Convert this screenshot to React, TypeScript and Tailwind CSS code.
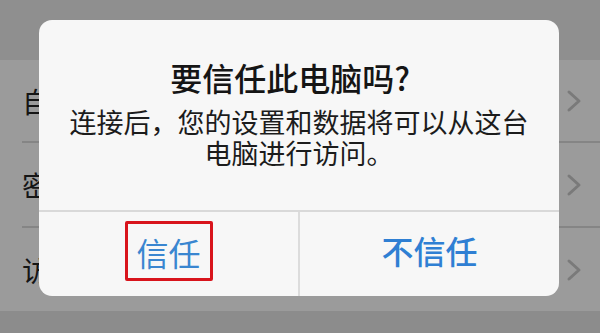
import React from "react";

const rows = [
  { label: "自", h: "h-[83px]" },
  { label: "密", h: "h-[85px]" },
  { label: "访", h: "h-[83px]" },
];

const Chevron = () => (
  <svg width="16" height="24" viewBox="0 0 16 24" fill="none">
    <polyline
      points="3,3 13,12 3,21"
      stroke="#7a7a7a"
      strokeWidth="3"
      strokeLinecap="round"
      strokeLinejoin="round"
    />
  </svg>
);

const TrustDialog = () => {
  return (
    <div className="absolute left-[39px] top-[20px] w-[520px] h-[276px] rounded-[13px] bg-[#f7f7f7] flex flex-col overflow-hidden">
      <div className="h-[190px] flex flex-col items-center pt-[39px]">
        <h1 className="text-[32px] leading-[36px] font-medium text-[#151515] mr-[18px]">
          要信任此电脑吗?
        </h1>
        <div className="mt-[11px] flex flex-col items-center text-[27px] leading-[31px] text-[#1c1c1c]">
          <p className="whitespace-nowrap">连接后，您的设置和数据将可以从这台</p>
          <p className="whitespace-nowrap">电脑进行访问。</p>
        </div>
      </div>
      <div className="h-[2px] bg-[#d9d9d9]" />
      <div className="flex-1 flex">
        <div className="flex-1 flex items-center justify-center">
          <div className="border-[3px] border-[#d8141c] rounded-[2px] w-[88px] h-[60px] flex items-center justify-center mt-[-6px]">
            <span className="text-[32px] leading-none text-[#3a86d0] pt-[2px]">信任</span>
          </div>
        </div>
        <div className="w-[2px] bg-[#dcdcdc]" />
        <div className="flex-1 flex items-center justify-center">
          <span className="text-[32px] leading-none text-[#2f7fd3] font-medium mt-[-8px]">不信任</span>
        </div>
      </div>
    </div>
  );
};

const App = () => {
  return (
    <div
      className="relative w-[600px] h-[333px] overflow-hidden bg-[#8e8e8e]"
      style={{ fontFamily: '"Noto Sans CJK SC", "Noto Sans", sans-serif' }}
    >
      <div className="h-[60px] bg-[#8f8f8f]" />
      <div className="bg-[#9b9b9b]">
        {rows.map((row, i) => (
          <div key={i} className={`${row.h} flex items-center pl-[22px]`}>
            <div
              className={`flex-1 h-full flex items-center pr-[18px] ${
                i < rows.length - 1 ? "border-b-[2px] border-[#858585]" : ""
              }`}
            >
              <span className="flex-1 text-[28px] text-[#151515]">{row.label}</span>
              <Chevron />
            </div>
          </div>
        ))}
      </div>
      <div className="h-[22px] bg-[#8c8c8c]" />
      <TrustDialog />
    </div>
  );
};

export default App;
